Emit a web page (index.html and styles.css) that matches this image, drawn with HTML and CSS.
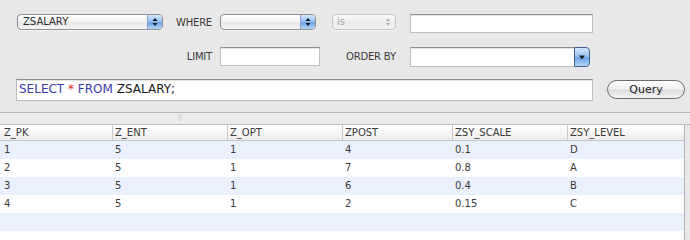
FILE: index.html
```html
<!DOCTYPE html>
<html>
<head>
<meta charset="utf-8">
<link rel="stylesheet" href="styles.css">
</head>
<body>
<div class="app">
  <div class="controls">
    <div class="row r1">
      <div class="popup p-table">
        <span class="ptext">ZSALARY</span>
        <span class="parrow"><svg width="14" height="14" viewBox="0 0 14 14"><path d="M4.5 6 L7 3 L9.5 6Z M4.5 8 L7 11 L9.5 8Z" fill="#1a1a1a"/></svg></span>
      </div>
      <span class="label l-where">WHERE</span>
      <div class="popup p-where">
        <span class="ptext"></span>
        <span class="parrow"><svg width="14" height="14" viewBox="0 0 14 14"><path d="M4.5 6 L7 3 L9.5 6Z M4.5 8 L7 11 L9.5 8Z" fill="#1a1a1a"/></svg></span>
      </div>
      <div class="popup disabled p-op">
        <span class="ptext">is</span>
        <span class="parrow"><svg width="14" height="14" viewBox="0 0 14 14"><path d="M5 6 L7 3.5 L9 6Z M5 8 L7 10.5 L9 8Z" fill="#a8a8a8"/></svg></span>
      </div>
      <div class="field f-value"></div>
    </div>
    <div class="row r2">
      <span class="label l-limit">LIMIT</span>
      <div class="field f-limit"></div>
      <span class="label l-order">ORDER BY</span>
      <div class="combo">
        <div class="combo-field"></div>
        <div class="combo-btn"><svg width="14" height="18" viewBox="0 0 14 18"><path d="M4 7.5 L10 7.5 L7 11.5Z" fill="#1a1a1a"/></svg></div>
      </div>
    </div>
    <div class="row r3">
      <div class="field sql"><span class="kw">SELECT</span> <span class="op">*</span> <span class="kw">FROM</span> ZSALARY;</div>
      <button class="btn">Query</button>
    </div>
  </div>
  <div class="splitter"><span class="grip"></span></div>
  <div class="table">
    <div class="trow thead">
      <div class="cell">Z_PK</div><div class="cell">Z_ENT</div><div class="cell">Z_OPT</div><div class="cell">ZPOST</div><div class="cell">ZSY_SCALE</div><div class="cell">ZSY_LEVEL</div>
    </div>
    <div class="trow odd">
      <div class="cell">1</div><div class="cell">5</div><div class="cell">1</div><div class="cell">4</div><div class="cell">0.1</div><div class="cell">D</div>
    </div>
    <div class="trow">
      <div class="cell">2</div><div class="cell">5</div><div class="cell">1</div><div class="cell">7</div><div class="cell">0.8</div><div class="cell">A</div>
    </div>
    <div class="trow odd">
      <div class="cell">3</div><div class="cell">5</div><div class="cell">1</div><div class="cell">6</div><div class="cell">0.4</div><div class="cell">B</div>
    </div>
    <div class="trow">
      <div class="cell">4</div><div class="cell">5</div><div class="cell">1</div><div class="cell">2</div><div class="cell">0.15</div><div class="cell">C</div>
    </div>
    <div class="trow odd">
      <div class="cell"></div><div class="cell"></div><div class="cell"></div><div class="cell"></div><div class="cell"></div><div class="cell"></div>
    </div>
    <div class="trow">
      <div class="cell"></div><div class="cell"></div><div class="cell"></div><div class="cell"></div><div class="cell"></div><div class="cell"></div>
    </div>
  </div>
</div>
</body>
</html>
```
FILE: styles.css
```css
* { box-sizing: border-box; }
html, body { margin: 0; padding: 0; background: #e8e8e8; height: 100%; }
body {
  width: 690px;
  min-height: 227px;
  overflow: hidden;
  font-family: "DejaVu Sans", "Liberation Sans", sans-serif;
  font-size: 10px;
  color: #3a3a3a;
}
.app { width: 690px; height: 100%; min-height: 227px; display: flex; flex-direction: column; }

.controls {
  height: 113px;
  flex: none;
  border-bottom: 1px solid #b6b6b6;
  display: flex;
  flex-direction: column;
}
.row { display: flex; align-items: flex-start; }
.r1 { margin-top: 14px; height: 19px; padding-left: 17px; }
.r2 { margin-top: 14px; height: 20px; }
.r3 { margin-top: 12px; height: 22px; padding-left: 16px; }

.label { color: #3a3a3a; white-space: nowrap; letter-spacing: -0.2px; }
.r1 .label { line-height: 17px; }
.r2 .label { line-height: 20px; }
.l-where { margin-left: 13px; }
.l-limit { width: 212px; text-align: right; }
.l-order { margin-left: 26px; }

.popup {
  height: 16px;
  display: flex;
  border: 1px solid #8e8e8e;
  border-radius: 4px;
  background: linear-gradient(#ffffff 0%, #f4f4f4 45%, #e6e6e6 55%, #f6f6f6 100%);
  overflow: hidden;
  box-shadow: 0 1px 0 rgba(255,255,255,0.6);
}
.ptext { flex: 1; padding-left: 5px; line-height: 14px; color: #2a2a2a; }
.parrow {
  width: 15px;
  display: flex;
  align-items: center;
  justify-content: center;
  border-left: 1px solid #8a9fbf;
  background: linear-gradient(#d4e6fb 0%, #9cc4f2 45%, #6aa3e8 55%, #b7d8fb 100%);
}
.p-table { width: 146px; }
.p-where { width: 96px; margin-left: 8px; }
.p-op { width: 64px; margin-left: 16px; }
.popup.disabled { border-color: #c4c4c4; background: linear-gradient(#fafafa, #ececec 55%, #f2f2f2); }
.popup.disabled .ptext { color: #a6a6a6; padding-left: 4px; }
.popup.disabled .parrow { background: transparent; border-left: none; }

.field {
  background: #fff;
  border: 1px solid #bdbdbd;
  border-top-color: #8e8e8e;
  box-shadow: inset 0 1px 0 #e4e4e4;
}
.f-value { width: 183px; height: 19px; margin-left: 14px; }
.f-limit { width: 100px; height: 19px; margin-left: 8px; }

.combo { display: flex; width: 180px; height: 20px; margin-left: 14px; }
.combo-field {
  flex: 1;
  background: #fff;
  border: 1px solid #bdbdbd;
  border-top-color: #8e8e8e;
  border-right: none;
  box-shadow: inset 0 1px 0 #e4e4e4;
}
.combo-btn {
  width: 16px;
  display: flex;
  align-items: center;
  justify-content: center;
  border: 1px solid #3e5f8f;
  border-radius: 0 4px 4px 0;
  background: linear-gradient(#d4e6fb 0%, #9cc4f2 45%, #6aa3e8 55%, #b7d8fb 100%);
}

.sql {
  width: 577px;
  height: 22px;
  padding-left: 2px;
  font-size: 12px;
  line-height: 19px;
  color: #1a1a1a;
  white-space: nowrap;
}
.kw { color: #3a3aa8; }
.op { color: #e02424; }

.btn {
  margin-left: 14px;
  margin-top: 1px;
  width: 78px;
  height: 19px;
  padding: 0;
  border: 1px solid #6c6c6c;
  border-radius: 10px;
  background: linear-gradient(#ffffff 0%, #f2f2f2 45%, #dcdcdc 55%, #f4f4f4 100%);
  font-family: "DejaVu Sans", "Liberation Sans", sans-serif;
  font-size: 11px;
  color: #1a1a1a;
  line-height: 16px;
}

.splitter {
  height: 12px;
  flex: none;
  border-bottom: 1px solid #bcbcbc;
  background: #ebebeb;
  position: relative;
}
.grip {
  position: absolute;
  left: 178px;
  top: 1px;
  width: 4px;
  height: 7px;
  background: #dedede;
}

.table {
  width: 685px;
  flex: 1;
  overflow: hidden;
  border-right: 1px solid #b2b2b2;
  background: #fff;
}
.trow {
  display: grid;
  grid-template-columns: 113px 115px 115px 110px 115px 116px;
  height: 18px;
  line-height: 18px;
}
.trow .cell { padding-left: 2px; white-space: nowrap; color: #3a3a3a; }
.trow .cell:first-child { padding-left: 4px; }
.thead {
  height: 16px;
  line-height: 15px;
  border-bottom: 1px solid #c6c6c6;
  background: linear-gradient(#ffffff 0%, #f6f6f6 50%, #ebebeb 100%);
}
.thead .cell { border-right: 1px solid #c8c8c8; color: #3a3a3a; }
.thead .cell:last-child { border-right: none; }
.odd { background: #ebf1fc; }
```
